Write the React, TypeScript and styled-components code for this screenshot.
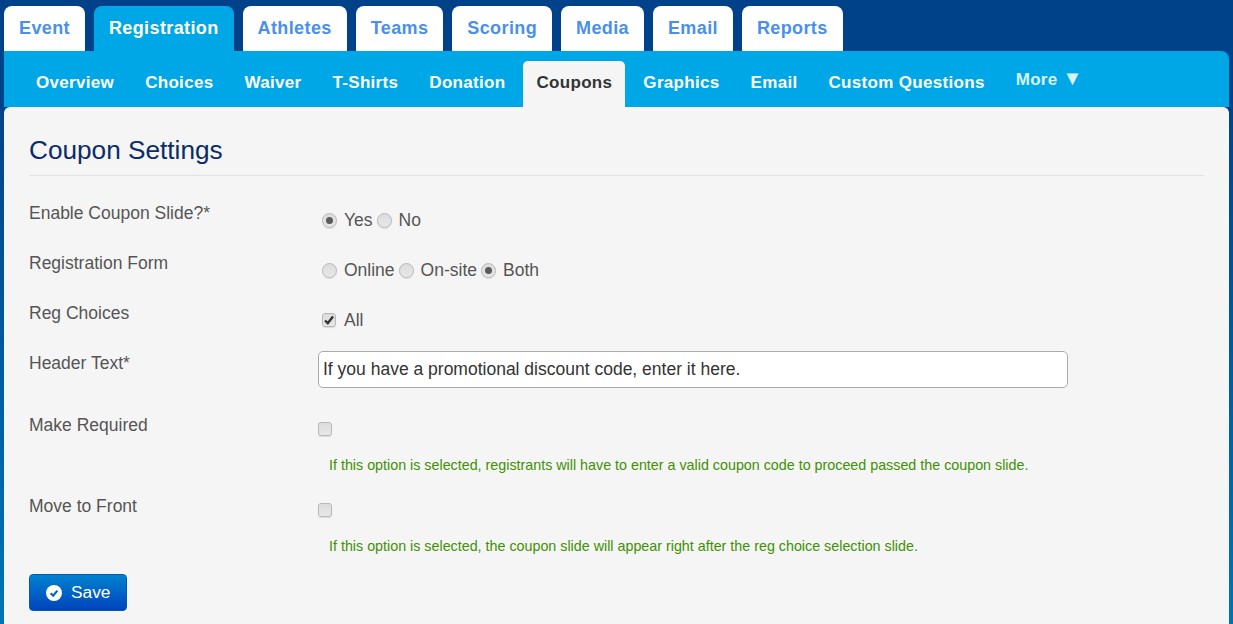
import React from "react";
import styled, { createGlobalStyle } from "styled-components";

const GlobalStyle = createGlobalStyle`
  html, body {
    margin: 0;
    padding: 0;
    height: 624px;
    overflow: hidden;
    font-family: "Liberation Sans", Arial, sans-serif;
    background: linear-gradient(#00428a 0, #00428a 100px, #0074b6 624px);
  }
  * { box-sizing: border-box; }
`;

const Page = styled.div`
  padding: 6px 4px 0;
  width: 1233px;
`;

const MainTabs = styled.div`
  display: flex;
  gap: 9px;
  height: 45px;
`;

const MainTab = styled.a<{ $active?: boolean }>`
  height: 45px;
  padding: 0 15px;
  line-height: 45px;
  font-size: 18px;
  font-weight: bold;
  letter-spacing: 0.385px;
  border-radius: 8px 8px 0 0;
  background: ${(p) => (p.$active ? "#00a7e7" : "#fff")};
  color: ${(p) => (p.$active ? "#fff" : "#4a90e9")};
`;

const SubBar = styled.div`
  display: flex;
  align-items: flex-end;
  height: 56px;
  padding-left: 19px;
  gap: 5px;
  background: #00a7e7;
  border-radius: 0 8px 0 0;
`;

const SubTab = styled.a<{ $active?: boolean }>`
  height: 46px;
  padding: 0 13px;
  line-height: 43px;
  font-size: 17px;
  font-weight: bold;
  letter-spacing: 0.315px;
  border-radius: 5px 5px 0 0;
  background: ${(p) => (p.$active ? "#f5f5f5" : "transparent")};
  color: ${(p) => (p.$active ? "#333" : "#fff")};
`;

const MoreTab = styled(SubTab)`
  color: #d9f3fd;
  line-height: 25px;
  align-self: flex-start;
  padding-top: 16px;
`;

const MoreArrow = styled.span`
  font-size: 20px;
  line-height: 20px;
`;

const Panel = styled.div`
  height: 540px;
  padding: 24px 25px 0;
  background: #f5f5f5;
  border-radius: 6px 6px 0 0;
`;

const Title = styled.h2`
  margin: 0 0 26px;
  height: 45px;
  font-size: 26.2px;
  font-weight: normal;
  line-height: 38px;
  color: #0a2c6b;
  border-bottom: 1px solid #e0e0e0;
`;

const Row = styled.div<{ $height: number }>`
  display: grid;
  grid-template-columns: 289px 1fr;
  height: ${(p) => p.$height}px;
`;

const Label = styled.div`
  font-size: 17.5px;
  line-height: 22px;
  color: #555;
`;

const Options = styled.div<{ $top?: number }>`
  display: flex;
  align-items: center;
  height: 20px;
  margin-top: ${(p) => p.$top ?? 8}px;
  font-size: 17.5px;
  line-height: 18px;
  color: #555;
`;

const Option = styled.span`
  display: flex;
  align-items: center;
`;

const Radio = styled.span<{ $checked?: boolean }>`
  position: relative;
  width: 15px;
  height: 15px;
  margin: 0 7px 0 4px;
  border-radius: 50%;
  border: 1px solid #b8b8b8;
  background: linear-gradient(#dcdcdc, #e8e8e8);
  box-shadow: 0 1px 1px rgba(0, 0, 0, 0.1);
  &::after {
    content: "";
    display: ${(p) => (p.$checked ? "block" : "none")};
    position: absolute;
    left: 3px;
    top: 3px;
    width: 7px;
    height: 7px;
    border-radius: 50%;
    background: #5a5a5a;
  }
`;

const Check = styled.span<{ $flush?: boolean }>`
  display: inline-flex;
  align-items: center;
  justify-content: center;
  width: 14px;
  height: 14px;
  margin: 0 8px 0 ${(p) => (p.$flush ? 0 : 4)}px;
  border-radius: 3px;
  border: 1px solid #b8b8b8;
  background: linear-gradient(#dcdcdc, #e8e8e8);
  box-shadow: 0 1px 1px rgba(0, 0, 0, 0.1);
`;

const TextInput = styled.input`
  display: block;
  width: 750px;
  height: 37px;
  margin-top: -1px;
  padding: 0 4px;
  font-family: inherit;
  font-size: 17.5px;
  color: #333;
  background: #fff;
  border: 1px solid #aaa;
  border-radius: 5px;
`;

const Field = styled.div``;

const Hint = styled.div`
  margin: 18px 0 0 11px;
  font-size: 14.3px;
  line-height: 16px;
  color: #3e9100;
`;

const SaveButton = styled.button`
  display: flex;
  align-items: center;
  gap: 9px;
  width: 98px;
  height: 37px;
  padding: 0 0 0 16px;
  font-family: inherit;
  font-size: 17.3px;
  color: #fff;
  border: 1px solid #0059b8;
  border-radius: 4px;
  background: linear-gradient(#0082cf, #0044bb);
`;

const mainTabs = ["Event", "Registration", "Athletes", "Teams", "Scoring", "Media", "Email", "Reports"];
const subTabs = ["Overview", "Choices", "Waiver", "T-Shirts", "Donation", "Coupons", "Graphics", "Email", "Custom Questions"];

const CheckMark = () => (
  <svg width="12" height="12" viewBox="0 0 12 12">
    <path d="M2 6.5 L4.8 9.2 L10 2.6" fill="none" stroke="#333" strokeWidth="2.4" />
  </svg>
);

const SaveIcon = () => (
  <svg width="16" height="16" viewBox="0 0 16 16">
    <circle cx="8" cy="8" r="8" fill="#fff" />
    <path d="M4.6 8.2 L7.2 10.6 L11.4 5.6" fill="none" stroke="#0066c8" strokeWidth="2.2" />
  </svg>
);

export default function App() {
  return (
    <Page>
      <GlobalStyle />
      <MainTabs>
        {mainTabs.map((t) => (
          <MainTab key={t} $active={t === "Registration"}>{t}</MainTab>
        ))}
      </MainTabs>
      <SubBar>
        {subTabs.map((t) => (
          <SubTab key={t} $active={t === "Coupons"}>{t}</SubTab>
        ))}
        <MoreTab>More <MoreArrow>▼</MoreArrow></MoreTab>
      </SubBar>
      <Panel>
        <Title>Coupon Settings</Title>
        <Row $height={50}>
          <Label>Enable Coupon Slide?*</Label>
          <Options>
            <Option><Radio $checked />Yes</Option>
            <Option><Radio />No</Option>
          </Options>
        </Row>
        <Row $height={50}>
          <Label>Registration Form</Label>
          <Options>
            <Option><Radio />Online</Option>
            <Option><Radio />On-site</Option>
            <Option><Radio $checked />Both</Option>
          </Options>
        </Row>
        <Row $height={50}>
          <Label>Reg Choices</Label>
          <Options>
            <Option><Check><CheckMark /></Check>All</Option>
          </Options>
        </Row>
        <Row $height={62}>
          <Label>Header Text*</Label>
          <TextInput defaultValue="If you have a promotional discount code, enter it here." />
        </Row>
        <Row $height={81}>
          <Label>Make Required</Label>
          <Field>
            <Options $top={5}><Check $flush /></Options>
            <Hint>If this option is selected, registrants will have to enter a valid coupon code to proceed passed the coupon slide.</Hint>
          </Field>
        </Row>
        <Row $height={79}>
          <Label>Move to Front</Label>
          <Field>
            <Options $top={5}><Check $flush /></Options>
            <Hint>If this option is selected, the coupon slide will appear right after the reg choice selection slide.</Hint>
          </Field>
        </Row>
        <SaveButton><SaveIcon />Save</SaveButton>
      </Panel>
    </Page>
  );
}
